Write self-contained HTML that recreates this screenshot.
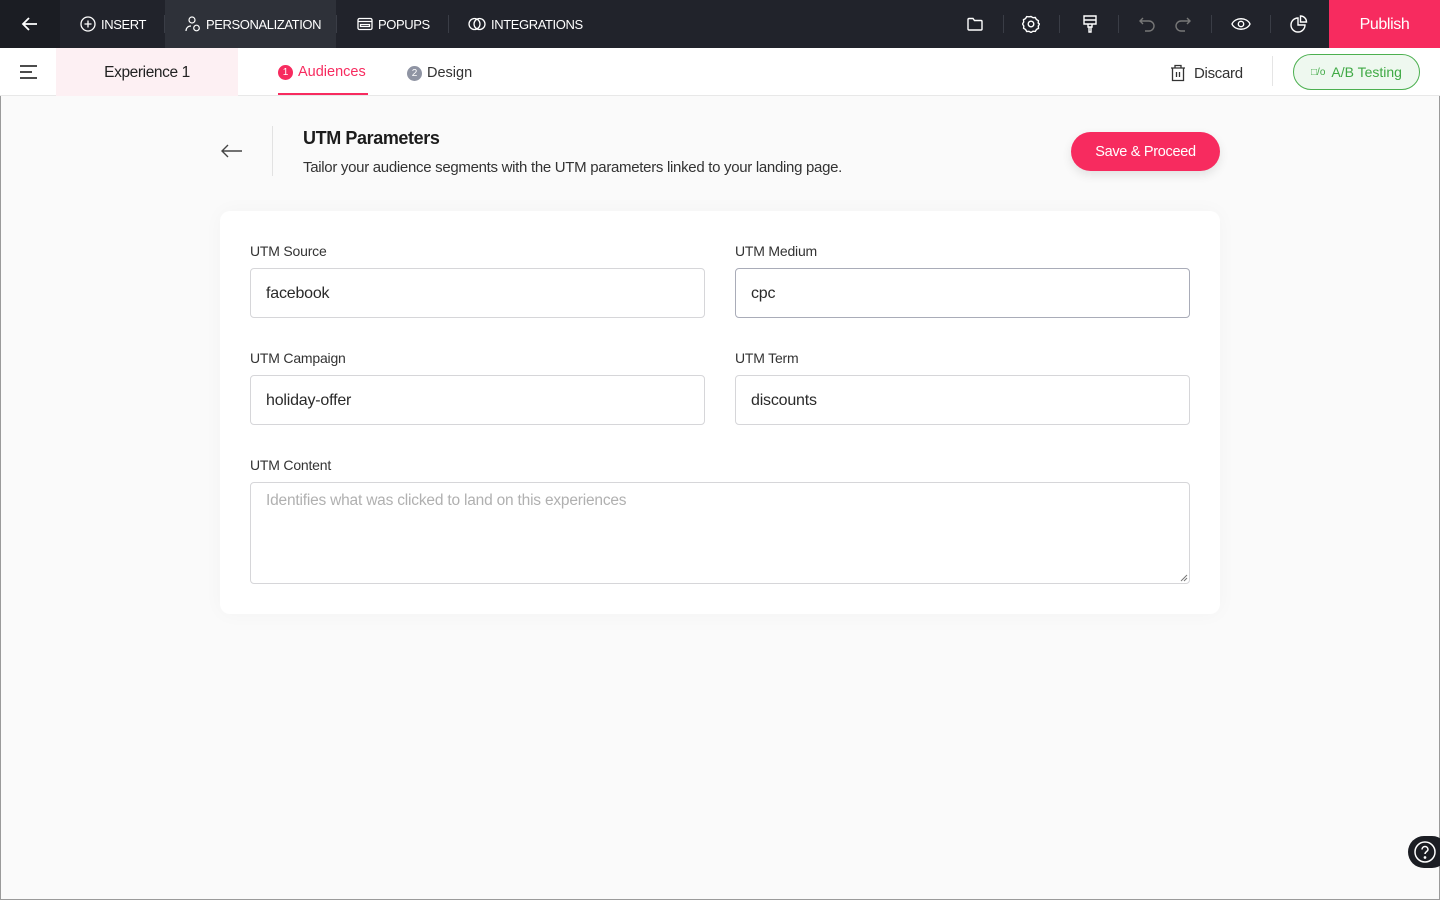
<!DOCTYPE html>
<html><head><meta charset="utf-8"><style>
*{box-sizing:border-box;margin:0;padding:0}
body{width:1440px;height:900px;overflow:hidden;background:#fafafa;font-family:"Liberation Sans",sans-serif;color:#222;position:relative;outline:1px solid #9a9a9a;outline-offset:-1px}
.top{position:absolute;left:0;top:0;width:1440px;height:48px;background:#21232b;color:#fff;font-size:13px}
.top .it{position:absolute;top:0;height:48px;display:flex;align-items:center;gap:5px;letter-spacing:-0.4px}
.sep{position:absolute;top:15px;width:1px;height:18px;background:#3a3d46}
.sub{position:absolute;left:0;top:48px;width:1440px;height:48px;background:#fff;border-bottom:1px solid #e8e8e8}
svg{display:block}
.card{position:absolute;left:220px;top:211px;width:1000px;height:403px;background:#fff;border-radius:10px;box-shadow:0 0 20px rgba(0,0,0,.03)}
.lbl{position:absolute;font-size:14px;color:#333;letter-spacing:-0.2px}
.inp{position:absolute;height:50px;border:1px solid #d6d6d9;border-radius:4px;font-size:16px;padding-left:15px;padding-top:2px;display:flex;align-items:center;color:#2a2a2a;letter-spacing:-0.2px}
</style></head><body>
<div class="top">
 <div class="it" style="left:0;width:60px;justify-content:center;background:#1b1d23"><svg width="20" height="20" viewBox="0 0 20 20" fill="none" stroke="#fff" stroke-width="1.8"><path d="M17 10H3M9 4L3 10l6 6"/></svg></div>
 <div class="it" style="left:80px"><svg width="16" height="16" viewBox="0 0 16 16" fill="none" stroke="#fff" stroke-width="1.3"><circle cx="8" cy="8" r="7"/><path d="M8 4.5v7M4.5 8h7"/></svg>INSERT</div>
 <div class="sep" style="left:164px"></div>
 <div class="it" style="left:165px;width:171px;background:#2e3139;padding-left:20px"><svg width="16" height="16" viewBox="0 0 16 16" fill="none" stroke="#fff" stroke-width="1.2"><circle cx="7" cy="4" r="3"/><path d="M1 15c0-3 2-5 5-5"/><circle cx="11.5" cy="12" r="2.8"/></svg>PERSONALIZATION</div>
 <div class="sep" style="left:336px"></div>
 <div class="it" style="left:357px"><svg width="16" height="16" viewBox="0 0 16 16" fill="none" stroke="#fff" stroke-width="1.3"><rect x="1" y="2.5" width="14" height="11" rx="1.5"/><path d="M1 5.5h14M3.5 8.5h9v2h-9z"/></svg>POPUPS</div>
 <div class="sep" style="left:448px"></div>
 <div class="it" style="left:468px"><svg width="18" height="16" viewBox="0 0 18 16" fill="none" stroke="#fff" stroke-width="1.3"><circle cx="6.5" cy="8" r="5.5"/><circle cx="11.5" cy="8" r="5.5"/></svg>INTEGRATIONS</div>
 <div class="it" style="left:966px"><svg width="18" height="18" viewBox="0 0 18 18" fill="none" stroke="#fff" stroke-width="1.4"><path d="M2 4.5a1 1 0 011-1h4l1.5 2H15a1 1 0 011 1V14a1 1 0 01-1 1H3a1 1 0 01-1-1z"/></svg></div>
 <div class="sep" style="left:1003px"></div>
 <div class="it" style="left:1022px"><svg width="18" height="18" viewBox="0 0 18 18" fill="none" stroke="#fff" stroke-width="1.4"><path d="M9 1.5l2 1.2 2.3-.2 1.1 2 2 1.2-.2 2.3L17.5 9l-1.2 2 .2 2.3-2 1.1-1.2 2-2.3-.2L9 17.5l-2-1.2-2.3.2-1.1-2-2-1.2.2-2.3L.5 9l1.2-2-.2-2.3 2-1.1 1.2-2 2.3.2z"/><circle cx="9" cy="9" r="2.8"/></svg></div>
 <div class="sep" style="left:1059px"></div>
 <div class="it" style="left:1081px"><svg width="18" height="20" viewBox="0 0 18 20" fill="none" stroke="#fff" stroke-width="1.4"><path d="M3 2h12v8H3zM3 6h12M7 10v3h4v-3M8 13v5h2v-5"/></svg></div>
 <div class="sep" style="left:1118px"></div>
 <div class="it" style="left:1138px"><svg width="18" height="16" viewBox="0 0 18 16" fill="none" stroke="#777" stroke-width="1.4"><path d="M5 2L2 5l3 3M2 5h9a5 5 0 010 10H7"/></svg></div>
 <div class="it" style="left:1174px"><svg width="18" height="16" viewBox="0 0 18 16" fill="none" stroke="#777" stroke-width="1.4"><path d="M13 2l3 3-3 3M16 5H7a5 5 0 000 10h4"/></svg></div>
 <div class="sep" style="left:1211px"></div>
 <div class="it" style="left:1231px"><svg width="20" height="14" viewBox="0 0 20 14" fill="none" stroke="#fff" stroke-width="1.4"><path d="M1 7c3-7 15-7 18 0-3 7-15 7-18 0z"/><circle cx="10" cy="7" r="2.7"/></svg></div>
 <div class="sep" style="left:1270px"></div>
 <div class="it" style="left:1290px"><svg width="18" height="18" viewBox="0 0 18 18" fill="none" stroke="#fff" stroke-width="1.4"><path d="M8 3a7 7 0 107 7H8z"/><path d="M10.5 1v6h6a6 6 0 00-6-6z"/></svg></div>
 <div class="it" style="left:1329px;width:111px;justify-content:center;background:#f72b5f;font-size:16px;padding-top:2px">Publish</div>
</div>
<div class="sub">
 <div style="position:absolute;left:20px;top:17px"><svg width="17" height="14" viewBox="0 0 17 14" stroke="#333" stroke-width="1.8"><path d="M0 1h17M0 7h12M0 13h17"/></svg></div>
 <div style="position:absolute;left:56px;top:0;width:182px;height:48px;background:#fdf0f3;display:flex;align-items:center;justify-content:center;font-size:15.5px;color:#222;letter-spacing:-0.4px;padding-top:2px">Experience 1</div>
 <div style="position:absolute;left:278px;top:16px;display:flex;align-items:center;gap:5px;font-size:14.5px;color:#f72b5f"><span style="width:15px;height:15px;border-radius:50%;background:#f72b5f;color:#fff;font-size:10px;display:flex;align-items:center;justify-content:center">1</span>Audiences</div>
 <div style="position:absolute;left:278px;top:45px;width:90px;height:2px;background:#f72b5f"></div>
 <div style="position:absolute;left:407px;top:17px;display:flex;align-items:center;gap:5px;font-size:14.5px;color:#333"><span style="width:15px;height:15px;border-radius:50%;background:#8f94a3;color:#fff;font-size:10px;display:flex;align-items:center;justify-content:center">2</span>Design</div>
 <div style="position:absolute;left:1170px;top:16px;display:flex;align-items:center;gap:8px;font-size:15px;color:#333;letter-spacing:-0.3px"><svg width="16" height="18" viewBox="0 0 16 18" fill="none" stroke="#333" stroke-width="1.3"><path d="M1 4h14M5 4V1.5h6V4M2.5 4v12.5h11V4M6.5 8v5M9.5 8v5"/></svg>Discard</div>
 <div style="position:absolute;left:1272px;top:8px;width:1px;height:30px;background:#e5e5e5"></div>
 <div style="position:absolute;left:1293px;top:6px;width:127px;height:36px;border:1px solid #4cb050;border-radius:18px;background:#eef8ef;color:#3fa944;font-size:14px;display:flex;align-items:center;justify-content:center;gap:6px"><span style="font-size:10px">□/o</span>A/B Testing</div>
</div>
<div style="position:absolute;left:220px;top:142px"><svg width="24" height="18" viewBox="0 0 24 18" fill="none" stroke="#444" stroke-width="1.4"><path d="M22 9H2M8 3L2 9l6 6"/></svg></div>
<div style="position:absolute;left:272px;top:126px;width:1px;height:50px;background:#e2e2e2"></div>
<div style="position:absolute;left:303px;top:128px;font-size:18px;font-weight:bold;color:#1c1c1c;letter-spacing:-0.4px">UTM Parameters</div>
<div style="position:absolute;left:303px;top:159px;font-size:15px;color:#333;letter-spacing:-0.3px">Tailor your audience segments with the UTM parameters linked to your landing page.</div>
<div style="position:absolute;left:1071px;top:132px;width:149px;height:39px;border-radius:20px;background:#f72b5f;color:#fff;font-size:14.5px;display:flex;align-items:center;justify-content:center;box-shadow:0 4px 10px rgba(0,0,0,.1);letter-spacing:-0.3px;padding-top:1px">Save &amp; Proceed</div>
<div class="card">
 <div class="lbl" style="left:30px;top:32px">UTM Source</div>
 <div class="inp" style="left:30px;top:57px;width:455px">facebook</div>
 <div class="lbl" style="left:515px;top:32px">UTM Medium</div>
 <div class="inp" style="left:515px;top:57px;width:455px;border-color:#a9acb8">cpc</div>
 <div class="lbl" style="left:30px;top:139px">UTM Campaign</div>
 <div class="inp" style="left:30px;top:164px;width:455px">holiday-offer</div>
 <div class="lbl" style="left:515px;top:139px">UTM Term</div>
 <div class="inp" style="left:515px;top:164px;width:455px">discounts</div>
 <div class="lbl" style="left:30px;top:246px">UTM Content</div>
 <div class="inp" style="left:30px;top:271px;width:940px;height:102px;align-items:flex-start;padding-top:9px;color:#b0b0b0;font-size:15.5px">Identifies what was clicked to land on this experiences</div>
 <svg style="position:absolute;left:960px;top:363px" width="8" height="8" viewBox="0 0 8 8" stroke="#777"><path d="M1 7L7 1M4 7L7 4"/></svg>
</div>
<div style="position:absolute;left:1408px;top:836px;width:40px;height:32px;border-radius:16px;background:#1b1d23"><svg style="position:absolute;left:5px;top:4px" width="24" height="24" viewBox="0 0 24 24" fill="none" stroke="#fff" stroke-width="1.5"><circle cx="12" cy="12" r="10"/><path d="M9 9.5a3 3 0 116 0c0 2-3 2.2-3 4.5"/><circle cx="12" cy="17.5" r=".6" fill="#fff"/></svg></div>
</body></html>
